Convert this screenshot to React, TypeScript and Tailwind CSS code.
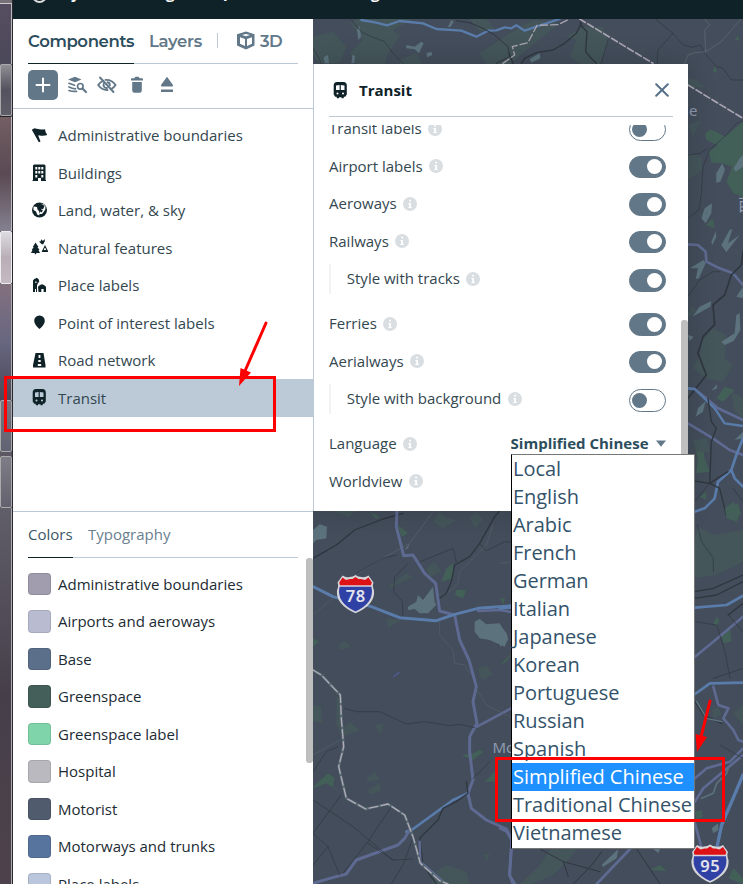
import React from "react";

type Shape = { d: string; c?: string; w?: number; o?: number; dash?: string };

const GREEN = "#44565a";
const LEAF = "#436058";
const WATER = "#5c737e";
const BLUE = "#5a7cab";
const VIOLET = "#5e6a92";
const DARK = "#2f363f";

function Fills({ items, color }: { items: string[]; color: string }) {
  return <path d={items.join(" ")} fill={color} />;
}

function Lines({ items }: { items: Shape[] }) {
  return (
    <>
      {items.map((s, i) => (
        <path
          key={i}
          d={s.d}
          fill="none"
          stroke={s.c ?? DARK}
          strokeWidth={s.w ?? 3}
          strokeOpacity={s.o ?? 1}
          strokeDasharray={s.dash}
          strokeLinejoin="round"
          strokeLinecap="round"
        />
      ))}
    </>
  );
}

function Shield({ x, y, label }: { x: number; y: number; label: string }) {
  return (
    <g transform={`translate(${x} ${y})`}>
      <path
        d="M5.5 0 Q9 2.500 12.500 1.500 Q16 1.500 18.500 -.5 Q21 1.500 24.500 1.500 Q28 2.500 31.500 0 L36.500 7 Q35 10 37 15 Q38.500 29 18.500 37.800 Q-1.500 29 0 15 Q2 10 .5 7Z"
        fill="#d6d5da"
      />
      <path d="M5.500 2 L9 4.500 L13 3.500 L15.500 3.500 L18.500 1.500 L21.500 3.500 L24 3.500 L28 4.500 L31.500 2 L34.800 7 L34 9.800 H3 L2.200 7Z" fill="#dc1217" />
      <path d="M2.600 11.300 H34.400 Q38 27 18.500 36 Q-1 27 2.600 11.300Z" fill="#3041a6" />
      <text x="18.800" y="26.500" textAnchor="middle" fontSize="16.500" fontWeight="600" letterSpacing=".5" fill="#e4e4ec" fontFamily="'Noto Sans', sans-serif">
        {label}
      </text>
    </g>
  );
}

function MapCanvas() {
  return (
    <svg className="absolute inset-0" width="430" height="865" viewBox="313 19 430 865">
      <rect x="313" y="19" width="430" height="865" fill="#434d5b" />

      <g transform="translate(313 0) scale(.33333)">
        <Fills
          color={GREEN}
          items={[
            "M0 110 L60 95 L100 140 L80 190 H20 L0 165Z",
            "M135 57 L300 57 L240 90 L260 110 L225 160 L215 192 H130 L110 160 L150 120 L110 70Z",
            "M500 160 L590 100 L660 60 L740 70 L640 150 L590 192 H520Z",
            "M770 170 L790 120 L760 110 L810 80 L870 80 L885 120 L860 192 H800Z",
            "M1125 235 L1150 240 L1175 262 L1125 262Z",
            "M1125 460 L1165 470 L1168 510 L1125 540Z",
            "M1125 375 L1165 360 L1140 410Z",
            "M470 57 L520 57 L545 85 L500 95Z",
            "M260 180 L310 160 L330 192 H260Z",
          ]}
        />
        <Fills
          color={LEAF}
          items={[
            "M1176 405 Q1185 385 1205 392 L1235 410 L1290 365 V590 L1262 580 L1240 545 L1258 500 L1230 490 L1195 488 L1188 455 L1215 435 L1180 420Z",
            "M1200 210 L1206 198 L1213 212 L1205 220Z",
            "M1265 120 L1274 108 L1282 122Z",
            "M1178 675 L1200 655 L1205 685Z",
          ]}
        />
        <Fills
          color={WATER}
          items={[
            "M405 80 L415 60 L422 65 L412 82Z",
            "M132 90 L140 78 L144 110 L136 120Z",
            "M280 135 L305 140 L325 125 L332 130 L318 160 L305 148 L280 145Z",
            "M340 160 L355 155 L358 165 L343 172Z",
            "M32 172 L45 165 L48 190 H36Z",
            "M118 165 L126 168 L124 190 H115Z",
            "M650 178 L680 160 L682 175 L655 188Z",
            "M1210 520 L1228 490 L1236 510 L1222 545 L1210 548Z",
            "M1165 655 L1175 625 L1197 610 L1195 640 L1178 670Z",
            "M1262 505 L1280 475 L1290 465 V500 L1268 515Z",
          ]}
        />
        <Lines
          items={[
            { d: "M145 60 L190 68 L222 76 L260 63 L330 70 L370 87 L445 92 L490 110 L525 92 L550 91 L575 82 L595 85 L610 76 L635 92 L670 80 L740 57", c: BLUE, w: 7 },
            { d: "M115 60 L145 95 L175 110 L215 125 L240 160 L270 190", w: 2 },
            { d: "M430 62 L470 68 L510 85 L545 105 L585 140 L590 170 L550 190" },
            { d: "M588 160 L600 190 M805 70 L790 100 L755 130 L720 150 L670 158 L635 175 L625 190", w: 4 },
            { d: "M802 60 L803 75 L822 95 L818 155 L830 170 L850 190", w: 4 },
            { d: "M885 120 L865 190", w: 2 },
            { d: "M1030 60 L1080 100 L1035 150 L1032 190 M1080 100 L1110 135 L1140 142 L1162 135 L1175 160 L1210 200 L1230 205 L1255 240 H1290", w: 2 },
            { d: "M1290 362 L1270 370 L1245 400 L1190 450 L1170 500 L1165 580 L1158 630 L1125 655 M1125 465 L1160 460 L1185 445", w: 2 },
            { d: "M1175 57 L1190 75 L1175 90 L1178 155 L1145 158 L1125 165 L1115 190 M1178 155 L1225 125 L1290 50", c: "#56636f", w: 3 },
            { d: "M0 145 Q20 175 25 192", w: 2 },
            { d: "M570 190 L605 165 L598 140 L645 128 L672 76 L735 74 L770 57", c: "#a9a3b1", w: 4, dash: "22 9" },
            { d: "M800 57 L1020 190 M1125 255 L1290 355", c: "#aaa4b3", w: 5, dash: "20 8" },
          ]}
        />
      </g>

      <g transform="translate(313 225) scale(.33333)">
        <Fills
          color={GREEN}
          items={[
            "M1165 350 L1200 310 L1240 330 L1235 400 L1260 420 L1230 470 L1180 460 L1140 430 L1160 390Z",
            "M1125 265 L1140 240 L1150 260 L1125 275Z",
            "M1255 500 L1290 520 V580 L1265 560Z",
          ]}
        />
        <Fills
          color={LEAF}
          items={[
            "M1147 670 L1165 640 L1175 700 L1190 740 L1150 745 L1155 700Z",
            "M1240 850 L1275 835 L1285 870 H1240Z",
            "M1210 520 L1235 485 L1265 495 L1230 530Z",
            "M1160 815 L1180 800 L1180 825Z",
          ]}
        />
        <Fills
          color={WATER}
          items={[
            "M1225 60 L1250 15 L1258 12 L1245 55 L1280 30 L1240 82Z",
            "M1195 50 L1208 20 L1210 35 L1198 60Z",
            "M1130 130 L1172 105 L1178 115 L1158 160 L1148 162 L1155 130Z",
            "M1138 275 L1160 245 L1195 228 L1192 245Z",
            "M1270 215 L1290 185 V220Z",
            "M1225 350 L1265 325 L1270 270 L1280 265 L1282 315 L1262 348 L1235 360Z",
            "M1125 330 L1142 335 L1130 348Z",
            "M1195 497 L1212 478 L1212 490Z",
            "M1148 575 L1155 550 L1178 528 L1170 560Z",
            "M1265 645 L1290 620 V640Z",
          ]}
        />
        <Lines
          items={[
            { d: "M1125 58 L1155 60 L1178 80 L1180 110 L1220 130 L1260 145 L1290 180", c: VIOLET, w: 8 },
            { d: "M1290 80 L1285 120 L1255 150 L1235 210 L1200 240 L1205 298 L1170 335 L1155 385 L1180 450 L1125 520", w: 5 },
            { d: "M1125 215 L1160 165 L1200 140 H1220", w: 2 },
            { d: "M1125 490 L1145 492 L1180 520 L1215 550 L1290 585", c: VIOLET, w: 8 },
            { d: "M1125 490 L1145 492 L1205 550 L1235 595 L1290 603", c: BLUE, w: 7 },
            { d: "M1125 595 L1200 640 L1250 675 L1290 690", c: VIOLET, w: 8 },
            { d: "M1290 640 L1270 690 L1255 735 L1215 770 L1205 820 L1175 850 L1145 860 M1255 735 L1265 760 L1290 785", c: BLUE, w: 8 },
            { d: "M1185 520 L1195 590 L1210 610 L1195 650 L1190 775 L1220 790 L1240 870 M1145 768 L1190 775 L1245 740", w: 4 },
            { d: "M1190 775 L1145 830 M1260 790 L1290 830", w: 2 },
          ]}
        />
      </g>

      <g transform="translate(313 505) scale(.33333)">
        <Fills
          color={GREEN}
          items={[
            "M60 18 H130 L105 35Z",
            "M360 50 L380 20 L400 40 L430 45 L390 70Z",
            "M470 40 L490 20 L510 45 L485 70Z",
            "M340 190 L365 170 L385 200 L350 215Z",
            "M220 340 L265 345 L225 370Z",
            "M75 420 L95 408 L115 425 L85 435Z",
            "M495 490 L520 480 L540 510 L505 525Z",
            "M0 600 L25 605 L28 655 L0 650Z",
            "M70 570 L88 590 L82 680 L70 660Z",
            "M80 680 L110 650 L140 675 L90 695Z",
            "M185 660 L210 655 L205 690Z",
            "M160 820 L185 800 L200 825 L165 830Z",
            "M160 855 L200 835 L205 855 L175 870Z",
            "M350 1110 L400 1080 L460 1100 L470 1137 H360Z",
            "M230 240 L280 205 L300 215 L230 250Z",
            "M510 1050 L530 1045 L525 1070Z",
          ]}
        />
        <Fills
          color={LEAF}
          items={[
            "M255 60 L285 85 L265 95Z",
            "M385 230 L400 190 L420 175 L420 220Z",
            "M515 830 L545 800 L555 830Z",
            "M0 845 L45 805 L65 820 L60 845 L85 865 L40 835 L0 850Z",
            "M560 480 L600 440 L580 470Z",
            "M445 750 L480 745 L500 735 L512 740 L480 765Z",
            "M0 400 L18 410 L0 425Z",
            "M430 255 L460 255 L450 280 L425 270Z",
            "M170 20 L200 35 L190 42Z",
          ]}
        />
        <Fills
          color={WATER}
          items={[
            "M0 75 L20 58 L42 65 L40 100 L10 105 L0 115Z",
            "M285 305 L310 290 L315 270 L330 285 L360 245 L365 290 L370 300 L345 325 L320 325 L305 312 L285 315Z",
            "M485 350 L500 342 L520 358 L560 355 L585 400 L575 425 L530 405 L500 400 L485 380Z",
            "M275 135 L290 115 L285 130Z",
          ]}
        />
        <Lines
          items={[
            { d: "M0 160 L70 120 L125 75 L210 42 L270 25 M560 18 L545 35 L500 115 L470 155 L425 180 L415 230 L400 265 L380 280", w: 4 },
            { d: "M127 210 L200 165 L290 115 L360 20", c: "#56636f", w: 2 },
            { d: "M130 205 L210 160 L250 150 M310 175 L420 130 L430 170 M285 175 L245 215 L242 260 L268 290 L270 335 M500 115 L520 138 L575 110 L600 112", w: 2 },
            { d: "M252 18 L250 65 L272 152 L300 150 L335 205 L368 235 L380 318 L425 330 L440 405 L468 465 L490 545 L480 590 L492 655 L470 695 V740 L480 825 L465 865 L475 910 L520 945 L580 972 L597 1005 L590 1110 L600 1137", c: VIOLET, w: 9 },
            { d: "M0 245 L60 275 L175 305 L260 338 L370 347 L425 328 L495 310 L600 302", c: BLUE, w: 9 },
            { d: "M495 318 L560 315 L600 322", c: VIOLET, w: 7 },
            { d: "M492 665 L600 607", c: VIOLET, w: 8 },
            { d: "M465 865 L420 885 L300 972 L280 980", c: BLUE, w: 8 },
            { d: "M290 975 L275 1000 L255 1020 L130 1065 L100 1107 L50 1120 L0 1135", c: VIOLET, w: 9 },
            { d: "M95 610 L130 620 L200 620 L280 657 L335 650 L410 662 L440 658 L485 668", w: 2 },
            { d: "M380 350 L380 390 L420 435 L425 475 L455 480 L470 505 M490 550 L520 600 L600 640 M600 170 L560 175 M540 60 L520 120 L440 200 L435 235 L405 265 M0 750 L80 705 M0 330 L60 280", c: "#54616c", w: 2 },
            { d: "M460 830 L465 865 L430 890 L390 910 L375 945 L320 1000 L330 1080 L370 1137", w: 4 },
            { d: "M530 770 L480 820 M0 885 L120 965 L240 1065 L300 1062 M0 985 L45 1025 L0 1080 M45 1025 L80 1110 M85 870 L0 985 M235 905 L165 1010 L90 1105 M300 1000 L270 1080 L235 1137 M165 1015 L240 1065 M75 725 L40 740 L0 800", w: 2 },
            { d: "M320 1010 L322 1070 L390 1130", c: VIOLET, w: 7 },
            { d: "M0 495 L25 510 L82 570 L85 640 L92 725 L77 785 L100 880 L158 912 L225 897 L275 930 L300 995 L322 1075 L380 1127 L405 1137", c: "#56686f", w: 8 },
            { d: "M0 495 L25 510 L82 570 L85 640 L92 725 L77 785 L100 880 L158 912 L225 897 L275 930 L300 995 L322 1075 L380 1127 L405 1137", c: "#b0abb9", w: 4, dash: "26 10" },
            { d: "M242 515 L258 502", c: "#4e598c", w: 5 },
          ]}
        />
      </g>

      <g transform="translate(500 435) scale(.33333)">
        <Fills
          color={GREEN}
          items={[
            "M595 275 L640 300 L730 285 V380 L650 420 L585 430 V310Z",
            "M635 825 L655 815 L665 840 L640 850Z",
            "M700 835 L729 810 V870Z",
            "M120 1290 L150 1242 L235 1242 L190 1290 L160 1320 L95 1347 H60Z",
            "M580 15 L620 10 L630 50 L590 50Z",
          ]}
        />
        <Fills
          color={LEAF}
          items={[
            "M675 220 L700 200 L720 235 L710 260 L680 250Z",
            "M640 565 L650 545 L658 555 L650 575Z",
            "M665 600 L690 580 L695 620 L670 625Z",
            "M585 1130 L605 1125 L608 1145 L590 1155Z",
            "M0 490 L15 490 L10 510Z",
            "M685 1330 L700 1300 L729 1330 V1347Z",
            "M450 1305 L480 1290 L500 1308Z",
          ]}
        />
        <Fills color={WATER} items={["M0 570 L20 595 L25 615 L0 635Z", "M635 1180 L655 1165 L655 1185 L640 1195Z", "M305 1290 L355 1242 L350 1270 L310 1295Z", "M460 1242 H480 L475 1255Z"]} />
        <Lines
          items={[
            { d: "M585 518 L680 510 L729 482", c: BLUE, w: 8 },
            { d: "M585 665 L640 620 L729 545", c: VIOLET, w: 8 },
            { d: "M585 777 L630 745 L729 743", c: BLUE, w: 8 },
            { d: "M640 755 L655 810 L685 820 L670 850 L700 885 L715 915 L729 920", c: VIOLET, w: 8 },
            { d: "M585 1030 L620 1000 L690 980 L729 940 M585 1100 L610 1060 L729 960", c: VIOLET, w: 8 },
            { d: "M729 1020 L695 1100 L665 1170 L650 1240", c: BLUE, w: 10 },
            { d: "M585 1165 L605 1240 M390 1242 L290 1347", c: VIOLET, w: 8 },
            { d: "M585 470 L640 460 L729 420 M585 490 L650 480 L729 440", w: 4 },
            { d: "M592 270 L605 320 L640 370 L640 410 M585 560 L650 570 L675 650 L690 730 M640 730 L729 700 M685 540 L729 590 M660 930 L729 970", w: 2 },
            { d: "M685 540 L729 505 M585 800 L610 840 L665 865", w: 4 },
            { d: "M590 800 L620 850 L665 860", c: "#5e7680", w: 4 },
            { d: "M605 1090 L640 1075 L650 1045 L680 1015 L685 1000", c: "#5c717b", w: 5 },
            { d: "M120 1242 L190 1280 L205 1325 M305 1250 L275 1290 L220 1347 M190 1280 L300 1310 M410 1242 L480 1347", w: 3 },
            { d: "M0 520 L34 518", c: BLUE, w: 8 },
            { d: "M0 1180 L20 1190 L35 1215 L28 1320 L45 1347", c: VIOLET, w: 8 },
          ]}
        />
      </g>

      <g fill="#8f9ab0" fontFamily="'Noto Sans', sans-serif" fontSize="15">
        <text x="689" y="116">e</text>
        <text x="492.500" y="753">Mo</text>
        <text x="738" y="211" fontSize="17" fontFamily="'Noto Sans CJK SC', sans-serif">西</text>
      </g>
      <Shield x={337} y={575.5} label="78" />
      <Shield x={691.5} y={845} label="95" />
    </svg>
  );
}

const icons: Record<string, React.ReactNode> = {
  flag: (
    <path d="M.8 2.800 L3.500 1.300 Q8 3 14 2.200 Q14.200 5.500 16.200 8 Q12.500 9.500 7.800 8.300 L7.300 8.700 L9.500 14.500 L7.800 15.300Z" />
  ),
  building: (
    <path
      fillRule="evenodd"
      d="M3 .5 H13.500 L14.500 1.500 V16 H15 V17 H10 V14 H7 V17 H1.500 V16 H2 V1.500Z M4.300 3 V5.500 H6.300 V3Z M7.300 3 V5.500 H9.300 V3Z M10.300 3 V5.500 H12.300 V3Z M4.300 7 V9.500 H6.300 V7Z M7.300 7 V9.500 H9.300 V7Z M10.300 7 V9.500 H12.300 V7Z M4.300 11 V13.500 H6.300 V11Z M10.300 11 V13.500 H12.300 V11Z"
    />
  ),
  globe: (
    <>
      <circle cx="8.500" cy="8" r="7.500" />
      <path d="M2.500 4.500 L6 5 L6.500 7.500 L8 9 L8.500 12 L11 12 L13 9.500 L14.300 7.500 L14.500 4.500 L12.500 2.200 L10 1.800 L9.500 3.500 L11 5 L10.500 8 L12 8.500 L10.500 10.500 L9 9.500 L8.200 13.500 L6.200 12.500 L5 9.500 L2.500 8Z" fill="#fff" />
      <path d="M8.800 2.500 L10.800 2 L13.500 4 L12 7.500 L9.500 6Z" />
    </>
  ),
  nature: (
    <path d="M4.500 3.500 L7.500 8 H6.500 L8.500 11 H7.500 L9 14 H5.200 V15.200 H3.800 V14 H0 L1.500 11 H.7 L2.700 8 H1.800Z M10 0 L11 1.500 L12.500 1.500 L14 0 L13.700 2.500 L12 5.500 L10.500 5 L8 2.500 L9.800 2.200Z M14 6 L17.500 13 H10.500Z M13.600 9 L12.800 11 H15.200 L14.400 9Z" fillRule="evenodd" />
  ),
  place: (
    <path
      fillRule="evenodd"
      d="M2 15 V3.500 L3.500 1.800 H4.300 L5.500 .8 L7.500 2 Q8.300 3 8.200 5.500 H6.800 V7.500 H6 V15 H5 V12 H4 V15Z M7 9.800 Q11 4.500 15 9.800 V15 H12.600 V12 H10.300 V15 H7.500Z M4.300 4.500 V6 H5.500 V4.500Z"
    />
  ),
  pin: <path d="M8.500 1.500 Q13.800 2 13.800 7 Q13.500 11 8.500 15 Q3.500 11 3.200 7 Q3.200 2 8.500 1.500Z" />,
  road: (
    <path fillRule="evenodd" d="M4.500 1 H12.500 L14.500 13 V15.500 H2 V13Z M7.600 3 V6 H9.400 V3Z M7.300 8 V10 H9.700 V8Z M6.800 12 V14 H10.200 V12Z" />
  ),
  transit: (
    <path
      fillRule="evenodd"
      d="M5 0 H11.500 Q14.800 .2 14.800 3.500 V12.500 L13.300 14.800 H12 L11.500 16.200 H9.500 V15.200 H7 V16.200 H5 L4.500 14.800 H3.200 L1.700 12.500 V3.500 Q1.700 .2 5 0Z M4 3.500 V8 H7.600 V3Z M8.800 3 V8 H12.500 V3.500Z M5.500 10.500 A1 1 0 1 0 5.500 12.500 A1 1 0 1 0 5.500 10.500Z M11 10.500 A1 1 0 1 0 11 12.500 A1 1 0 1 0 11 10.500Z"
    />
  ),
};

function Icon({ name }: { name: string }) {
  return (
    <svg width="17" height="17" viewBox="0 0 17 17" fill="#0f2228" className="shrink-0">
      {icons[name]}
    </svg>
  );
}

const components: [string, string][] = [
  ["flag", "Administrative boundaries"],
  ["building", "Buildings"],
  ["globe", "Land, water, & sky"],
  ["nature", "Natural features"],
  ["place", "Place labels"],
  ["pin", "Point of interest labels"],
  ["road", "Road network"],
  ["transit", "Transit"],
];

const colors: [string, string][] = [
  ["bg-[#a19dae]", "Administrative boundaries"],
  ["bg-[#b9bcd1]", "Airports and aeroways"],
  ["bg-[#5c6f8a]", "Base"],
  ["bg-[#445f5a]", "Greenspace"],
  ["bg-[#7fd5a9]", "Greenspace label"],
  ["bg-[#bab9bf]", "Hospital"],
  ["bg-[#505b6d]", "Motorist"],
  ["bg-[#57749f]", "Motorways and trunks"],
  ["bg-[#b9c6dc]", "Place labels"],
];

const languages = [
  "Local",
  "English",
  "Arabic",
  "French",
  "German",
  "Italian",
  "Japanese",
  "Korean",
  "Portuguese",
  "Russian",
  "Spanish",
  "Simplified Chinese",
  "Traditional Chinese",
  "Vietnamese",
];

function Toolbar() {
  return (
    <div className="flex h-[45px] shrink-0 items-center border-b border-[#bccad8] pb-[2px] pl-[15px] text-[#627888]">
      <div className="flex size-[30px] items-center justify-center rounded-[5px] bg-[#627888]">
        <svg width="16" height="16" viewBox="0 0 16 16" stroke="#fff" strokeWidth="2" strokeLinecap="round">
          <path d="M8 1.500 V14.500 M1.500 8 H14.500" />
        </svg>
      </div>
      <svg className="ml-[10px]" width="20" height="18" viewBox="0 0 20 18" fill="none" stroke="currentColor" strokeWidth="1.700" strokeLinecap="round">
        <path d="M0 3.500 L7 .8 L13.500 3.500 L7 6.300Z" fill="currentColor" stroke="none" />
        <path d="M1 7.300 L6.500 9.200 M1 11 Q4 12.500 7.500 12.800 M1 14.500 Q5 15.800 8.500 15.300" />
        <circle cx="12.300" cy="10.300" r="2.800" />
        <path d="M14.500 12.500 L18 16" strokeWidth="2.200" />
      </svg>
      <svg className="ml-[9px]" width="20" height="18" viewBox="0 0 20 18" fill="none" stroke="currentColor" strokeWidth="1.900" strokeLinecap="round">
        <path d="M6 4.800 Q3 6.200 1.200 9 Q5 14.300 10.500 14 M8.500 3.900 Q15 3.500 18.500 9 Q17 11.500 14.500 12.800" />
        <path d="M6.800 7.500 Q6 9.500 7.300 11 Q8.300 12.300 10 12 M10.500 6.300 Q13 6.800 12.800 9.300" />
        <path d="M3 1.500 L16.500 16" />
      </svg>
      <svg className="ml-[13px]" width="14" height="18" viewBox="0 0 14 18" fill="currentColor">
        <path d="M1 3 Q1 2.200 2 2.200 H4.200 L5.500 .8 H8.500 L9.800 2.200 H12 Q13 2.200 13 3 V4.500 H1Z M2.200 6 H11.800 V14.500 Q11.800 16.800 9.500 16.800 H4.500 Q2.200 16.800 2.200 14.500Z" />
      </svg>
      <svg className="ml-[16px]" width="14" height="18" viewBox="0 0 14 18" fill="currentColor">
        <path d="M7 .8 L13 9 Q13.300 10.500 12 10.500 H2 Q.7 10.500 1 9Z M1 13.500 H13 V16 H1Z" />
      </svg>
    </div>
  );
}

function LeftPanel() {
  return (
    <div className="relative z-10 flex h-[865px] w-[300px] shrink-0 flex-col bg-white">
      <div className="mx-[15px] flex h-[45px] shrink-0 items-stretch border-b border-[#bccad8] font-[Montserrat,Inter,sans-serif] text-[16.500px] font-semibold leading-[44px] text-[#627888]">
        <span className="-mb-px w-[106px] whitespace-nowrap border-b border-[#0f2228] tracking-[-0.370px] text-[#2c4d5c]">Components</span>
        <span className="ml-[15px] w-[53px] whitespace-nowrap tracking-[-0.300px]">Layers</span>
        <span className="ml-[15px] mt-[14px] h-[15px] w-px bg-[#bccad8]" />
        <svg className="ml-[18px] mt-[12px]" width="20" height="20" viewBox="0 0 20 20">
          <path fill="#627888" fillRule="evenodd" d="M10 .5 L18.500 3.200 V14.500 L10 18.500 L1 14.500 V3.200Z M4 6.300 V12.800 L9 15 V8Z M11 8 V15 L16 12.800 V6.300Z M6 4 L10 5.200 L14 4 L10 2.900Z" />
        </svg>
        <span className="ml-[4px] tracking-[-0.500px]">3D</span>
      </div>
      <Toolbar />
      <div className="h-[403px] shrink-0 border-b border-[#bccad8] pt-[7.500px]">
        {components.map(([icon, label]) => (
          <div
            key={label}
            className={
              "flex h-[37.500px] items-center gap-[10.500px] pl-[17.500px] text-[15px] text-[#33474f] " + (label === "Transit" ? "bg-[#bccad8]" : "")
            }
          >
            <Icon name={icon} />
            <span>{label}</span>
          </div>
        ))}
      </div>
      <div className="mx-[15px] flex h-[46px] shrink-0 border-b border-[#bccad8] text-[15px] leading-[45px]">
        <span className="-mb-px w-[45px] border-b border-[#0f2228] text-[#3c5766]">Colors</span>
        <span className="ml-[15px] text-[#6a8090]">Typography</span>
      </div>
      <div className="flex h-[326px] overflow-hidden">
        <div className="w-[293px] pt-[7px]">
          {colors.map(([bg, label]) => (
            <div key={label} className="flex h-[37.500px] items-center pl-[15px] text-[15px] text-[#1c2b33]">
              <span className={"h-[22.500px] w-[23px] rounded-[4px] border border-black/10 " + bg} />
              <span className="ml-[7px]">{label}</span>
            </div>
          ))}
        </div>
        <div className="h-[205px] w-[7px] rounded-[3px] bg-[#bfbfbf]" />
      </div>
    </div>
  );
}

function Info() {
  return (
    <svg width="14" height="14" viewBox="0 0 14 14" className="ml-[6.500px]">
      <circle cx="7" cy="7" r="7" fill="#d9dee2" />
      <path d="M6.200 2.800 H8 V4.500 H6.200Z M5.300 6 H8 V10 H8.800 V11 H5.300 V10 H6.200 V7 H5.300Z" fill="#fff" />
    </svg>
  );
}

function Toggle({ on }: { on: boolean }) {
  return (
    <span
      className={
        "flex h-[22.500px] w-[37px] items-center rounded-full border border-[#627888] " +
        (on ? "justify-end bg-[#627888] pr-[3px]" : "justify-start bg-white pl-[2px]")
      }
    >
      <span className={"size-[15px] rounded-full " + (on ? "bg-white" : "bg-[#627888]")} />
    </span>
  );
}

function Row({ label, children }: { label: string; children?: React.ReactNode }) {
  return (
    <div className="flex h-[37.500px] items-center justify-between">
      <span className="flex items-center pb-[1.500px]">
        {label}
        <Info />
      </span>
      {children}
    </div>
  );
}

function SubRow({ label, on }: { label: string; on: boolean }) {
  return (
    <div className="flex h-[45px] items-start justify-between">
      <span className="mt-[3px] flex h-[30px] items-center border-l-2 border-[#f2f3f5] pl-[15.800px]">
        {label}
        <Info />
      </span>
      <span className="mt-[8.500px]">
        <Toggle on={on} />
      </span>
    </div>
  );
}

function TransitPanel() {
  return (
    <div className="relative mt-[45px] h-[447px] w-[375px] border-l border-[#bccad8] bg-white shadow-[0_0_25px_rgba(0,0,0,0.18)]">
      <div className="mx-[15px] flex h-[53px] items-center border-b border-[#bccad8]">
        <span className="ml-[2.500px]">
          <Icon name="transit" />
        </span>
        <span className="ml-[10.500px] grow text-[15px] font-bold text-[#0f2228]">Transit</span>
        <svg width="14" height="14" viewBox="0 0 14 14" className="mr-[4px]" stroke="#58718a" strokeWidth="2" strokeLinecap="round">
          <path d="M1.200 1.200 L12.800 12.800 M12.800 1.200 L1.200 12.800" />
        </svg>
      </div>
      <div className="mt-[8px] flex h-[386px] overflow-hidden">
        <div className="-mt-[14.500px] ml-[15px] w-[337px] text-[15px] text-[#33474f]">
          <Row label="Transit labels">
            <Toggle on={false} />
          </Row>
          <Row label="Airport labels">
            <Toggle on />
          </Row>
          <Row label="Aeroways">
            <Toggle on />
          </Row>
          <Row label="Railways">
            <Toggle on />
          </Row>
          <SubRow label="Style with tracks" on />
          <Row label="Ferries">
            <Toggle on />
          </Row>
          <Row label="Aerialways">
            <Toggle on />
          </Row>
          <SubRow label="Style with background" on={false} />
          <Row label="Language">
            <span className="flex items-center whitespace-nowrap pb-[1.500px] font-bold text-[#2c4d5c]">
              Simplified Chinese
              <svg width="10" height="7" viewBox="0 0 10 7" className="ml-[7.500px]">
                <path d="M0 .5 H10 L5 6.800Z" fill="#627888" />
              </svg>
            </span>
          </Row>
          <Row label="Worldview" />
        </div>
        <div className="ml-[15px] mt-[195px] h-[191px] w-[7px] rounded-t-[3px] bg-[#bfbfbf]" />
      </div>
    </div>
  );
}

function DesktopEdge() {
  return (
    <div className="flex w-[13px] shrink-0 flex-col border-r border-[#2a2730] bg-[#5c5762]">
      <div className="h-[4px] border-b border-[#ccc] bg-[#777079]" />
      <div className="h-[60px] border-r border-[#bbb] bg-linear-to-b from-[#564e60] to-[#4b4859]" />
      <div className="h-[52px] rounded-[2px] border border-[#a9a9ac] bg-linear-to-b from-[#8f8e94] via-[#53525e] to-[#5e5d68]" />
      <div className="h-[115px] border-r border-t border-r-[#bbb] border-t-[#222] bg-linear-to-b from-[#735e64] via-[#5a4a53] via-50% to-[#858190]" />
      <div className="h-[53px] rounded-[2px] border border-[#eee] bg-linear-to-b from-[#dcdce0] via-[#b9aeb7] to-[#c5bac2]" />
      <div className="h-[116px] border-r border-r-[#aaa] bg-linear-to-b from-[#83707f] via-[#676780] to-[#4b4757]" />
      <div className="h-[52px] rounded-[2px] border border-[#aaa] bg-linear-to-b from-[#77757f] to-[#606372]" />
      <div className="mt-[4px] h-[52px] rounded-[2px] border border-[#aaa] bg-linear-to-b from-[#7e7d87] to-[#62616d]" />
      <div className="grow border-r border-r-[#aaa] bg-linear-to-b from-[#605e69] via-[#463f4a] to-[#4d424b]" />
    </div>
  );
}

export default function App() {
  return (
    <div className="relative flex h-[884px] w-[743px] overflow-hidden bg-white font-['Open_Sans','Noto_Sans',sans-serif]">
      <DesktopEdge />
      <div className="flex w-[730px] flex-col">
        <div className="relative h-[19px] overflow-hidden bg-[#0f2228] text-[15px] font-bold leading-[20px] text-white">
          <svg className="absolute left-[19px] top-[-12px]" width="15" height="15" viewBox="0 0 15 15">
            <circle cx="7.500" cy="7.500" r="6.500" fill="none" stroke="#ddd" strokeWidth="2" />
          </svg>
          <span className="absolute left-[58px] top-[-17px]">y</span>
          <span className="absolute left-[153px] top-[-17px]">g</span>
          <span className="absolute left-[210px] top-[-18px]">p</span>
          <span className="absolute left-[358px] top-[-17px]">g</span>
        </div>
        <div className="flex">
          <LeftPanel />
          <div className="relative h-[865px] w-[430px]">
            <MapCanvas />
            <TransitPanel />
          </div>
        </div>
      </div>

      <div className="absolute left-[511px] top-[454px] z-20 h-[395px] w-[184px] border border-[#767676] border-l-black bg-white text-[20px] leading-[28px] tracking-[-0.040px] text-[#34536a]">
        {languages.map((l) => (
          <div key={l} className={"h-[28px] whitespace-nowrap pl-px " + (l === "Simplified Chinese" ? "bg-[#1e90ff] text-white" : "")}>
            {l}
          </div>
        ))}
      </div>

      <svg className="absolute inset-0 z-30" width="743" height="884" viewBox="0 0 743 884" fill="none" stroke="#f00" strokeWidth="3">
        <rect x="5.500" y="377.500" width="269" height="53" />
        <rect x="496.500" y="758.500" width="227" height="62" />
        <path d="M266 323 L245 371 M710 701 L701 737" strokeLinecap="round" />
        <path d="M239 386 L240.500 368 L251 372.500Z M697 752 L695.500 734 L707 737Z" fill="#f00" stroke="none" />
      </svg>
    </div>
  );
}
